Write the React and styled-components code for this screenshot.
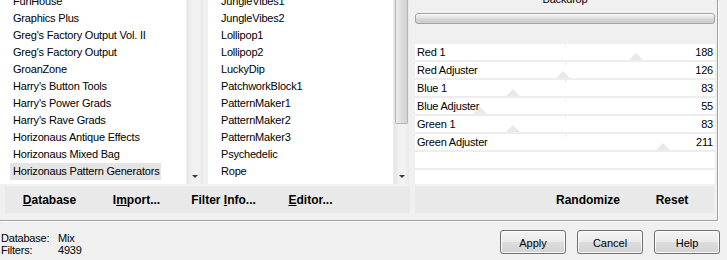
import React from 'react';
import styled, { createGlobalStyle } from 'styled-components';

const Global = createGlobalStyle`
  html, body { margin: 0; padding: 0; background: #f0f0f0; overflow: hidden; }
  body {
    font-family: "Liberation Sans", Arial, sans-serif;
    font-size: 11px;
    letter-spacing: -0.2px;
    color: #000;
  }
`;

const Dialog = styled.div`
  width: 727px;
  height: 260px;
  display: flex;
  flex-direction: column;
  background: #f0f0f0;
`;

const Frame = styled.div`
  width: 717px;
  height: 220px;
  border-right: 1px solid #a0a0a0;
  border-bottom: 1px solid #a0a0a0;
  box-shadow: 1px 1px 0 #ffffff;
  display: grid;
  grid-template-columns: 410px 304px;
  column-gap: 3px;
  grid-template-rows: 186px 27px;
  align-content: start;
`;

const Lists = styled.div`
  display: flex;
  gap: 5px;
  align-items: flex-start;
`;

const ListBox = styled.div`
  display: flex;
  width: ${p => p.$w}px;
  height: 184px;
  background: #fff;
  overflow: hidden;
`;

const ListBody = styled.ul`
  flex: 1;
  margin: -7px 0 0;
  padding: 0 0 0 ${p => p.$indent}px;
  list-style: none;
`;

const Item = styled.li`
  height: 17px;
  line-height: 17px;
  white-space: nowrap;
`;

const ItemText = styled.span`
  display: inline-block;
  padding: 0 2px 0 3px;
  background: ${p => (p.$sel ? '#e5e5e5' : 'transparent')};
`;

const ScrollTrack = styled.div`
  width: ${p => p.$w}px;
  display: flex;
  flex-direction: column;
  background: linear-gradient(to right, #e6e6e6, #f0f0f0 30%, #f2f2f2 70%, #e9e9e9);
  border-left: 1px solid #ececec;
  box-sizing: border-box;
`;

const Thumb = styled.div`
  height: ${p => p.$h}px;
  margin: 0 1px;
  border: 1px solid #b2b2b2;
  border-top: none;
  border-radius: 0 0 2px 2px;
  background: linear-gradient(to right, #eeeeee, #dddddd 50%, #d2d2d2);
`;

const TrackFill = styled.div`
  flex: 1;
`;

const ArrowButton = styled.div`
  height: 16px;
  display: flex;
  align-items: center;
  justify-content: center;
`;

const ArrowGlyph = styled.span`
  width: 0;
  height: 0;
  border-left: 3px solid transparent;
  border-right: 3px solid transparent;
  border-top: 3px solid #3a3a3a;
`;

const Panel = styled.div`
  display: flex;
  flex-direction: column;
  height: 184px;
  overflow: hidden;
`;

const Title = styled.div`
  text-align: center;
  height: 13px;
  line-height: 13px;
  margin-top: -7px;
`;

const EmptyBar = styled.div`
  height: 9px;
  margin: 7px 2px 20px;
  border: 1px solid #a4a4a4;
  border-radius: 3px;
  background: linear-gradient(#f6f6f6, #e2e2e2 45%, #d4d4d4 55%, #cdcdcd);
  box-shadow: inset 0 1px 0 #fbfbfb;
`;

const ParamArea = styled.div`
  flex: 1;
  margin: 0 2px;
  background: #fff;
`;

const ParamRow = styled.div`
  position: relative;
  height: 16px;
  line-height: 17px;
  display: flex;
  justify-content: space-between;
  padding: 0 2px;
  border-bottom: 2px solid #ededed;
`;

const ParamText = styled.span`
  position: relative;
`;

const SliderMark = styled.span`
  position: absolute;
  bottom: 0;
  width: 0;
  height: 0;
  margin-left: -7px;
  border-left: 7px solid transparent;
  border-right: 7px solid transparent;
  border-bottom: 7px solid #e9e9e9;
`;

const CenterTick = styled.span`
  position: absolute;
  top: 0;
  left: 50%;
  width: 1px;
  height: 3px;
  background: #ececec;
`;

const ToolBar = styled.div`
  display: flex;
  align-items: flex-start;
  justify-content: ${p => (p.$end ? 'flex-end' : 'flex-start')};
  background: #e9e9e9;
  margin: ${p => (p.$end ? '0 3px 0 2px' : '0 0 0 5px')};
  padding-left: ${p => (p.$end ? 0 : 1)}px;
  padding-top: 2px;
`;

const ToolButton = styled.div`
  width: ${p => p.$w}px;
  text-align: center;
  font-weight: bold;
  font-size: 12px;
  letter-spacing: 0;
  line-height: 25px;
  white-space: nowrap;
`;

const Key = styled.span`
  text-decoration: underline;
`;

const Bottom = styled.div`
  flex: 1;
  display: flex;
  justify-content: space-between;
  align-items: flex-start;
  padding: 9px 7px 0 1px;
`;

const Status = styled.div`
  display: grid;
  grid-template-columns: 57px auto;
  line-height: 12px;
  margin-top: 2px;
`;

const Buttons = styled.div`
  display: flex;
  gap: 11px;
`;

const PushButton = styled.div`
  width: 66px;
  height: 24px;
  box-sizing: border-box;
  border: 1px solid #707070;
  border-radius: 3px;
  background: linear-gradient(#f3f3f3, #ebebeb 48%, #dddddd 52%, #d2d2d2);
  box-shadow: inset 0 0 0 1px #fbfbfb;
  display: flex;
  align-items: center;
  justify-content: center;
  padding-top: 1px;
  letter-spacing: 0;
`;

const list1 = [
  'FunHouse',
  'Graphics Plus',
  "Greg's Factory Output Vol. II",
  "Greg's Factory Output",
  'GroanZone',
  "Harry's Button Tools",
  "Harry's Power Grads",
  "Harry's Rave Grads",
  'Horizonaus Antique Effects',
  'Horizonaus Mixed Bag',
  'Horizonaus Pattern Generators',
  'I.C.NET Software',
];

const list2 = [
  'JungleVibes1',
  'JungleVibes2',
  'Lollipop1',
  'Lollipop2',
  'LuckyDip',
  'PatchworkBlock1',
  'PatternMaker1',
  'PatternMaker2',
  'PatternMaker3',
  'Psychedelic',
  'Rope',
  'Sawtooth',
];

const params = [
  ['Red 1', 188],
  ['Red Adjuster', 126],
  ['Blue 1', 83],
  ['Blue Adjuster', 55],
  ['Green 1', 83],
  ['Green Adjuster', 211],
];

function ScrollList({ items, width, scrollW, indent, selected, thumb }) {
  return (
    <ListBox $w={width}>
      <ListBody $indent={indent}>
        {items.map(t => (
          <Item key={t}>
            <ItemText $sel={t === selected}>{t}</ItemText>
          </Item>
        ))}
      </ListBody>
      <ScrollTrack $w={scrollW}>
        {thumb ? <Thumb $h={thumb} /> : null}
        <TrackFill />
        <ArrowButton>
          <ArrowGlyph />
        </ArrowButton>
      </ScrollTrack>
    </ListBox>
  );
}

export default function App() {
  return (
    <Dialog>
      <Global />
      <Frame>
        <Lists>
          <ScrollList
            items={list1}
            width={203}
            scrollW={17}
            indent={10}
            selected="Horizonaus Pattern Generators"
          />
          <ScrollList items={list2} width={201} scrollW={16} indent={10} thumb={123} />
        </Lists>
        <Panel>
          <Title>Backdrop</Title>
          <EmptyBar />
          <ParamArea>
            {params.map(([name, v]) => (
              <ParamRow key={name}>
                <CenterTick />
                <SliderMark style={{ left: `${(v / 255) * 100}%` }} />
                <ParamText>{name}</ParamText>
                <ParamText>{v}</ParamText>
              </ParamRow>
            ))}
            <ParamRow />
          </ParamArea>
        </Panel>
        <ToolBar>
          <ToolButton $w={87}><Key>D</Key>atabase</ToolButton>
          <ToolButton $w={87}>I<Key>m</Key>port...</ToolButton>
          <ToolButton $w={87}>Filter <Key>I</Key>nfo...</ToolButton>
          <ToolButton $w={87}><Key>E</Key>ditor...</ToolButton>
        </ToolBar>
        <ToolBar $end>
          <ToolButton $w={84}>Randomize</ToolButton>
          <ToolButton $w={84}>Reset</ToolButton>
        </ToolBar>
      </Frame>
      <Bottom>
        <Status>
          <span>Database:</span>
          <span>Mix</span>
          <span>Filters:</span>
          <span>4939</span>
        </Status>
        <Buttons>
          <PushButton>Apply</PushButton>
          <PushButton>Cancel</PushButton>
          <PushButton>Help</PushButton>
        </Buttons>
      </Bottom>
    </Dialog>
  );
}
